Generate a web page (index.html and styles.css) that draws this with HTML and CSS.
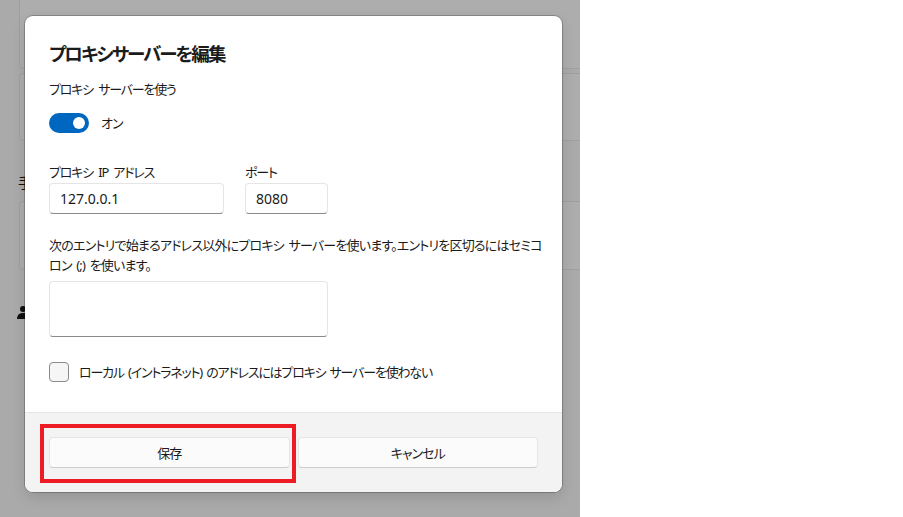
FILE: index.html
```html
<!DOCTYPE html>
<html lang="ja">
<head>
<meta charset="utf-8">
<link rel="stylesheet" href="styles.css">
</head>
<body>
<div class="screen">
  <div class="page">
    <div class="card card-top"></div>
    <div class="card card-mid"></div>
    <div class="section-head">手動プロキシ セットアップ</div>
    <div class="card card-low"></div>
    <div class="section-icon">
      <svg width="14" height="14" viewBox="0 0 14 14"><circle cx="7" cy="4" r="3" fill="#111"/><path d="M1 14 C1 9.5 4 8 7 8 C10 8 13 9.5 13 14 Z" fill="#111"/></svg>
    </div>
  </div>
  <div class="blank"></div>

  <div class="dialog">
    <div class="dialog-body">
      <h1 class="title">プロキシサーバーを編集</h1>
      <div class="label">プロキシ サーバーを使う</div>
      <div class="toggle-row">
        <span class="toggle"><span class="knob"></span></span>
        <span class="toggle-text">オン</span>
      </div>
      <div class="fields">
        <div class="field field-ip">
          <div class="label">プロキシ IP アドレス</div>
          <div class="input">127.0.0.1</div>
        </div>
        <div class="field field-port">
          <div class="label">ポート</div>
          <div class="input">8080</div>
        </div>
      </div>
      <p class="para">次のエントリで始まるアドレス以外にプロキシ サーバーを使います。エントリを区切るにはセミコロン (;) を使います。</p>
      <div class="textarea"></div>
      <div class="check-row">
        <span class="checkbox"></span>
        <span class="check-text">ローカル (イントラネット) のアドレスにはプロキシ サーバーを使わない</span>
      </div>
    </div>
    <div class="dialog-footer">
      <button class="btn">保存</button>
      <button class="btn">キャンセル</button>
    </div>
  </div>
  <div class="highlight"></div>
</div>
</body>
</html>
```

FILE: styles.css
```css
html, body {
  margin: 0;
  padding: 0;
}
body {
  width: 903px;
  height: 517px;
  overflow: hidden;
  background: #ffffff;
  font-family: "Noto Sans", "Noto Sans CJK JP", sans-serif;
  font-feature-settings: "palt";
  color: #1b1b1b;
}
.screen {
  position: relative;
  display: flex;
  width: 903px;
  height: 517px;
}
.page {
  width: 580px;
  height: 517px;
  background: #aaaaaa;
  overflow: hidden;
  padding-left: 19px;
  box-sizing: border-box;
}
.blank {
  flex: 1;
  background: #ffffff;
}
.card {
  width: 600px;
  background: #adadad;
  border: 1px solid #9f9f9f;
  border-radius: 4px;
  box-sizing: border-box;
}
.card-top {
  height: 79px;
  margin-top: -10px;
}
.card-mid {
  height: 68px;
  margin-top: 4px;
}
.section-head {
  height: 60px;
  box-sizing: border-box;
  padding-top: 32px;
  font-size: 14px;
  line-height: 20px;
  color: #111111;
  margin-left: -1px;
}
.card-low {
  height: 69px;
}
.section-icon {
  margin-top: 35px;
  margin-left: -3px;
  height: 14px;
}
.section-icon svg {
  display: block;
}

/* dialog */
.dialog {
  position: absolute;
  left: 25px;
  top: 16px;
  width: 537px;
  height: 476px;
  background: #ffffff;
  border-radius: 8px;
  box-shadow: 0 0 0 1px rgba(0, 0, 0, 0.22), 0 6px 14px rgba(0, 0, 0, 0.12);
  display: flex;
  flex-direction: column;
  overflow: hidden;
}
.dialog-body {
  flex: 1;
  padding: 24px 24px 0 24px;
}
.title {
  margin: 0;
  font-size: 18.5px;
  line-height: 28px;
  font-weight: 600;
  letter-spacing: -1.9px;
}
.label {
  font-size: 13px;
  line-height: 20px;
  letter-spacing: -1.2px;
  word-spacing: 3px;
}
.title + .label {
  margin-top: 11px;
}
.toggle-row {
  margin-top: 14px;
  height: 20px;
  display: flex;
  align-items: center;
  gap: 12px;
}
.toggle {
  width: 40px;
  height: 20px;
  border-radius: 10px;
  background: #0067c0;
  display: flex;
  align-items: center;
  justify-content: flex-end;
  padding-right: 4px;
  box-sizing: border-box;
}
.knob {
  width: 12px;
  height: 12px;
  border-radius: 50%;
  background: #ffffff;
}
.toggle-text {
  font-size: 13px;
  line-height: 20px;
  letter-spacing: -1px;
}
.fields {
  margin-top: 29px;
  display: flex;
  gap: 21px;
}
.field-ip {
  width: 175px;
}
.field-port {
  width: 83px;
}
.input {
  height: 31px;
  margin-top: 1px;
  box-sizing: border-box;
  border: 1px solid #e5e5e5;
  border-bottom-color: #8a8a8a;
  border-radius: 4px;
  padding-left: 10px;
  font-size: 14px;
  line-height: 29px;
  background: #ffffff;
}
.para {
  margin: 21px 0 0 0;
  width: 495px;
  font-size: 13px;
  line-height: 20px;
  letter-spacing: -0.8px;
  word-spacing: 2px;
}
.textarea {
  margin-top: 6px;
  width: 279px;
  height: 56px;
  box-sizing: border-box;
  border: 1px solid #e5e5e5;
  border-bottom-color: #8a8a8a;
  border-radius: 4px;
  background: #ffffff;
}
.check-row {
  margin-top: 25px;
  display: flex;
  align-items: center;
  gap: 10px;
  height: 20px;
}
.checkbox {
  width: 20px;
  height: 20px;
  box-sizing: border-box;
  border: 1px solid #8b8b8b;
  border-radius: 4px;
  background: #f6f6f6;
}
.check-text {
  font-size: 13px;
  line-height: 20px;
  letter-spacing: -1.2px;
  word-spacing: 2px;
}
.dialog-footer {
  height: 80px;
  box-sizing: border-box;
  background: #f3f3f3;
  border-top: 1px solid #e5e5e5;
  padding: 24px;
  display: flex;
  gap: 8px;
}
.btn {
  flex: 1;
  height: 31px;
  border: 1px solid #e5e5e5;
  border-bottom-color: #cccccc;
  border-radius: 4px;
  background: #fbfbfb;
  font-family: "Noto Sans", "Noto Sans CJK JP", sans-serif;
  font-feature-settings: "palt";
  font-size: 13px;
  letter-spacing: -1px;
  color: #1b1b1b;
  padding: 0;
}
.highlight {
  position: absolute;
  left: 40px;
  top: 424px;
  width: 256px;
  height: 59px;
  box-sizing: border-box;
  border: 4px solid #ed1c24;
}
```
